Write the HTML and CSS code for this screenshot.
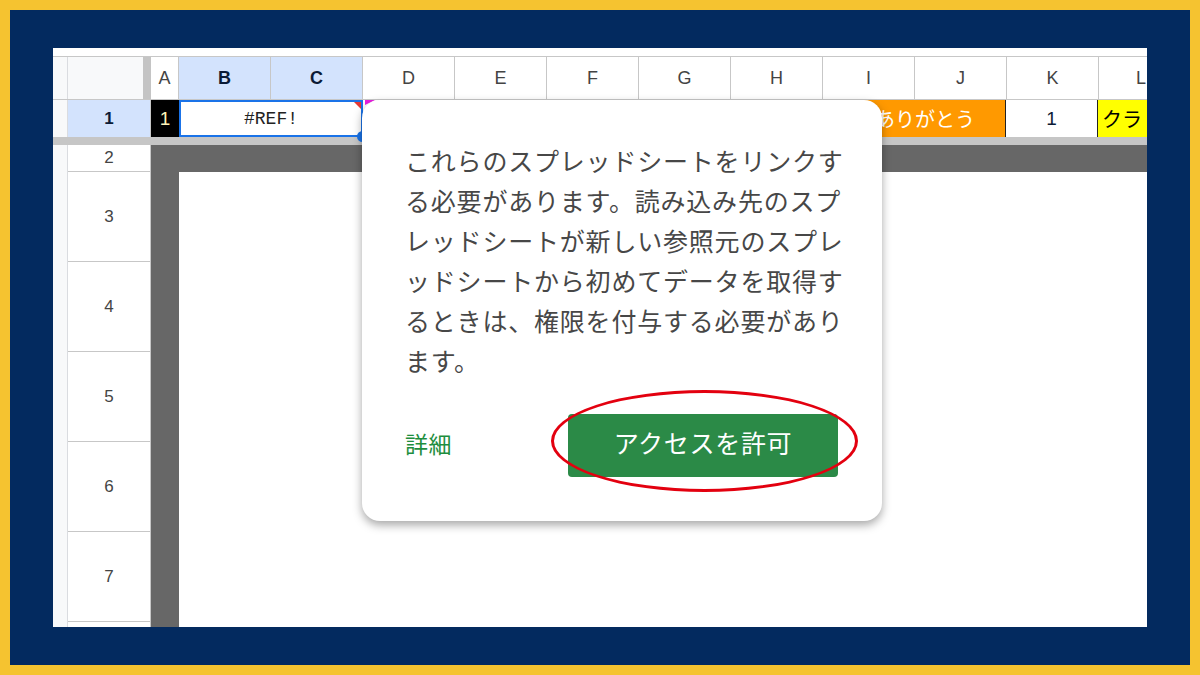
FILE: index.html
```html
<!DOCTYPE html>
<html lang="ja">
<head>
    <meta charset="UTF-8">
    <title>スプレッドシートのリンク</title>
    <link rel="stylesheet" href="styles.css">
</head>
<body>
    <div class="frame">
        <div class="sheet">
            <!-- 列見出し -->
            <div class="col-heads">
                <div class="strip"></div>
                <div class="corner"></div>
                <div class="freeze-v"></div>
                <div class="ch narrow">A</div>
                <div class="ch sel">B</div>
                <div class="ch sel">C</div>
                <div class="ch">D</div>
                <div class="ch">E</div>
                <div class="ch">F</div>
                <div class="ch">G</div>
                <div class="ch">H</div>
                <div class="ch">I</div>
                <div class="ch">J</div>
                <div class="ch">K</div>
                <div class="ch last">L</div>
            </div>

            <!-- 1行目 -->
            <div class="row1">
                <div class="strip"></div>
                <div class="rh sel">1</div>
                <div class="cell black">1</div>
                <div class="cell ref">#REF!<span class="err"></span><span class="note"></span><span class="handle"></span></div>
                <div class="cell blank5"></div>
                <div class="cell orange">ありがとう</div>
                <div class="cell num">1</div>
                <div class="cell yellow">クラ</div>
            </div>
            <div class="freeze-h"></div>

            <div class="body">
                <div class="row-heads">
                    <div class="strip"></div>
                    <div class="rh-list">
                        <div class="rh short">2</div>
                        <div class="rh tall">3</div>
                        <div class="rh tall">4</div>
                        <div class="rh tall">5</div>
                        <div class="rh tall">6</div>
                        <div class="rh tall">7</div>
                        <div class="rh rest"></div>
                    </div>
                </div>
                <div class="canvas">
                    <div class="canvas-inner"></div>
                </div>
            </div>

            <!-- アクセス許可ダイアログ -->
            <div class="dialog">
                <p class="message">これらのスプレッドシートをリンクする必要があります。読み込み先のスプレッドシートが新しい参照元のスプレッドシートから初めてデータを取得するときは、権限を付与する必要があります。</p>
                <div class="actions">
                    <a class="more" href="#">詳細</a>
                    <button class="allow">アクセスを許可</button>
                </div>
            </div>
            <div class="circle"></div>
        </div>
    </div>
</body>
</html>
```

FILE: styles.css
```css
body {
    margin: 0;
    padding: 0;
    font-family: 'Liberation Sans', Arial, 'Noto Sans CJK JP', sans-serif;
}

.frame {
    width: 1200px;
    height: 675px;
    box-sizing: border-box;
    border: 10px solid #f5c330;
    background: #032a5f;
    padding: 38px 43px;
}

.sheet {
    position: relative;
    height: 579px;
    background: #fff;
    padding-top: 8px;
    box-sizing: border-box;
    overflow: hidden;
}

.strip {
    flex: 0 0 15px;
    background: #f8f9fa;
    border-right: 1px solid #dadce0;
    box-sizing: border-box;
}

/* 列見出し */
.col-heads {
    display: flex;
    height: 44px;
    border-top: 1px solid #c7c7c7;
    border-bottom: 1px solid #c7c7c7;
    box-sizing: border-box;
}
.corner {
    flex: 0 0 75px;
    background: #f8f9fa;
}
.freeze-v {
    flex: 0 0 8px;
    background: #c4c4c4;
}
.ch {
    flex: 0 0 92px;
    display: flex;
    align-items: center;
    justify-content: center;
    border-right: 1px solid #c7c7c7;
    box-sizing: border-box;
    font-size: 18px;
    color: #444;
}
.ch.narrow {
    flex-basis: 28px;
}
.ch.sel {
    background: #d3e3fd;
    color: #0b1b36;
    font-weight: bold;
}
.ch.last {
    flex: 1;
    justify-content: flex-start;
    padding-left: 37px;
    border-right: none;
}

/* 1行目 */
.row1 {
    display: flex;
    height: 37px;
}
.rh {
    display: flex;
    align-items: center;
    justify-content: center;
    border-right: 1px solid #c7c7c7;
    border-bottom: 1px solid #c7c7c7;
    box-sizing: border-box;
    font-size: 17px;
    color: #444;
    background: #fff;
}
.row1 .rh {
    flex: 0 0 83px;
    border-bottom: none;
}
.rh.sel {
    background: #d3e3fd;
    color: #0b1b36;
    font-weight: bold;
}
.cell {
    display: flex;
    align-items: center;
    justify-content: center;
    box-sizing: border-box;
    font-size: 19px;
}
.cell.black {
    flex: 0 0 28px;
    background: #000;
    color: #fff4b8;
}
.cell.ref {
    position: relative;
    flex: 0 0 184px;
    border: 2px solid #1a73e8;
    font-family: 'Liberation Mono', monospace;
    font-size: 18px;
    color: #222;
}
.err {
    position: absolute;
    top: 0;
    right: 0;
    border-top: 7px solid #e53935;
    border-left: 7px solid transparent;
}
.note {
    position: absolute;
    top: -2px;
    right: -14px;
    border-top: 5px solid #e91ee0;
    border-right: 10px solid transparent;
}
.handle {
    position: absolute;
    right: -7px;
    bottom: -7px;
    width: 11px;
    height: 11px;
    border-radius: 50%;
    background: #1a73e8;
}
.cell.blank5 {
    flex: 0 0 459px;
}
.cell.orange {
    flex: 0 0 184px;
    background: #ff9900;
    color: #fff;
    justify-content: flex-end;
    padding-right: 30px;
    font-family: 'Noto Sans CJK JP', sans-serif;
    font-size: 20px;
    border-right: 1px solid #222;
}
.cell.num {
    flex: 0 0 92px;
    color: #0b1b36;
    border-right: 1px solid #222;
}
.cell.yellow {
    flex: 1;
    background: #ffff00;
    justify-content: flex-start;
    padding-left: 4px;
    font-family: 'Noto Sans CJK JP', sans-serif;
    font-size: 20px;
    white-space: nowrap;
}

.freeze-h {
    height: 8px;
    background: #c6c6c6;
}

/* 行見出しと図形 */
.body {
    display: flex;
    height: 482px;
}
.row-heads {
    display: flex;
    flex: 0 0 98px;
}
.rh-list {
    flex: 1;
    display: flex;
    flex-direction: column;
}
.rh.short {
    height: 27px;
}
.rh.tall {
    height: 90px;
}
.rh.rest {
    flex: 1;
    border-bottom: none;
}
.canvas {
    flex: 1;
    background: #676767;
    padding: 27px 0 0 28px;
}
.canvas-inner {
    height: 100%;
    background: #fff;
}

/* ダイアログ */
.dialog {
    position: absolute;
    left: 309px;
    top: 52px;
    width: 520px;
    box-sizing: border-box;
    padding: 40px 37px 44px 43px;
    background: #fff;
    border-radius: 18px;
    box-shadow: 0 4px 10px rgba(0, 0, 0, 0.35);
    font-family: 'Noto Sans CJK JP', sans-serif;
}
.message {
    margin: 0;
    width: 440px;
    font-size: 25px;
    line-height: 40px;
    letter-spacing: 0.8px;
    color: #474747;
    line-break: anywhere;
}
.actions {
    display: flex;
    justify-content: space-between;
    align-items: center;
    margin-top: 34px;
    padding-right: 7px;
}
.more {
    color: #1e8e3e;
    font-size: 23px;
    letter-spacing: 0.5px;
    text-decoration: none;
    margin-bottom: 6px;
}
.allow {
    width: 270px;
    height: 63px;
    padding: 0 0 8px;
    border: none;
    border-radius: 4px;
    background: #2b8a47;
    color: #fff;
    font-family: 'Noto Sans CJK JP', sans-serif;
    font-size: 25px;
    letter-spacing: 0.7px;
}

/* 赤い丸印 */
.circle {
    position: absolute;
    left: 498px;
    top: 342px;
    width: 307px;
    height: 102px;
    box-sizing: border-box;
    border: 3px solid #e3000f;
    border-radius: 50%;
}
```
